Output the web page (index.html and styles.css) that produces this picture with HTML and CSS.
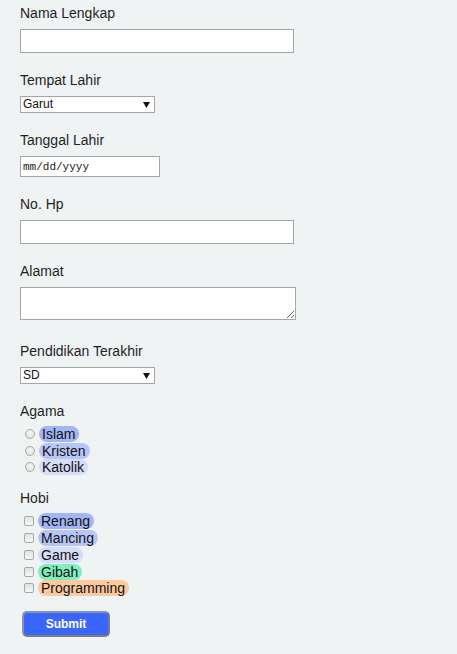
FILE: index.html
```html
<!DOCTYPE html>
<html lang="id">
<head>
<meta charset="utf-8">
<title>Form Biodata</title>
<link rel="stylesheet" href="styles.css">
</head>
<body>
<form class="form">
  <div class="field">
    <label class="label" for="nama">Nama Lengkap</label>
    <input class="text-input" id="nama" type="text">
  </div>
  <div class="field">
    <label class="label">Tempat Lahir</label>
    <div class="select">
      <span class="select-value">Garut</span>
      <svg class="select-arrow" width="7" height="6" viewBox="0 0 7 6"><path d="M0 0h7L3.5 6z" fill="#111"/></svg>
    </div>
  </div>
  <div class="field">
    <label class="label">Tanggal Lahir</label>
    <input class="date-input" type="text" placeholder="mm/dd/yyyy">
  </div>
  <div class="field">
    <label class="label">No. Hp</label>
    <input class="text-input" type="text">
  </div>
  <div class="field field-area">
    <label class="label">Alamat</label>
    <textarea class="area"></textarea>
  </div>
  <div class="field">
    <label class="label">Pendidikan Terakhir</label>
    <div class="select">
      <span class="select-value">SD</span>
      <svg class="select-arrow" width="7" height="6" viewBox="0 0 7 6"><path d="M0 0h7L3.5 6z" fill="#111"/></svg>
    </div>
  </div>
  <div class="field field-group">
    <span class="label">Agama</span>
    <div class="options radios">
      <div class="option"><span class="radio"></span><span class="pill c1">Islam</span></div>
      <div class="option"><span class="radio"></span><span class="pill c2">Kristen</span></div>
      <div class="option"><span class="radio"></span><span class="pill c3">Katolik</span></div>
    </div>
  </div>
  <div class="field field-group">
    <span class="label">Hobi</span>
    <div class="options checks">
      <div class="option"><span class="check"></span><span class="pill c1">Renang</span></div>
      <div class="option"><span class="check"></span><span class="pill c2">Mancing</span></div>
      <div class="option"><span class="check"></span><span class="pill c3">Game</span></div>
      <div class="option"><span class="check"></span><span class="pill green">Gibah</span></div>
      <div class="option"><span class="check"></span><span class="pill orange">Programming</span></div>
    </div>
  </div>
  <button class="submit" type="button">Submit</button>
</form>
</body>
</html>
```
FILE: styles.css
```css
html, body {
  margin: 0;
  padding: 0;
  background: #f0f3f4;
}
body {
  font-family: "Liberation Sans", Arial, sans-serif;
  color: #1a1a1a;
}
.form {
  display: flex;
  flex-direction: column;
  align-items: flex-start;
  padding: 5px 20px 0 20px;
}
.field {
  display: flex;
  flex-direction: column;
  align-items: flex-start;
  gap: 8px;
  margin-bottom: 19px;
}
.field-area {
  margin-bottom: 23px;
}
.field-group {
  gap: 7px;
  margin-bottom: 14px;
}
.label {
  font-size: 14px;
  line-height: 16px;
  color: #1f1f1f;
}
.text-input {
  box-sizing: border-box;
  width: 274px;
  height: 24px;
  margin: 0;
  border: 1px solid #a6a6a6;
  background: #fff;
  padding: 0 4px;
  font: 13px "Liberation Sans", Arial, sans-serif;
  outline: none;
}
.select {
  position: relative;
  box-sizing: border-box;
  width: 135px;
  height: 17px;
  border: 1px solid #a6a6a6;
  background: #fff;
  display: flex;
  align-items: center;
  justify-content: space-between;
  padding: 0 4px 0 2px;
}
.select-value {
  font-size: 12px;
  line-height: 15px;
  color: #111;
}
.select-arrow {
  display: block;
}
.date-input {
  box-sizing: border-box;
  width: 140px;
  height: 21px;
  margin: 0;
  border: 1px solid #a6a6a6;
  background: #fff;
  padding: 0 2px;
  font: 11px "Liberation Mono", "Courier New", monospace;
  outline: none;
}
.date-input::placeholder {
  color: #222;
  opacity: 1;
}
.area {
  box-sizing: border-box;
  width: 276px;
  height: 33px;
  margin: 0;
  border: 1px solid #a6a6a6;
  background: #fff;
  padding: 2px;
  resize: both;
  outline: none;
  display: block;
}
.options {
  display: flex;
  flex-direction: column;
}
.option {
  display: flex;
  align-items: center;
  font-size: 14px;
}
.radios .option {
  height: 16.6px;
}
.checks .option {
  height: 16.8px;
}
.radio {
  box-sizing: border-box;
  width: 10px;
  height: 10px;
  border-radius: 50%;
  border: 1px solid #a9a9a9;
  background: radial-gradient(circle at 50% 35%, #f6f6f6, #dcdcdc);
  margin: 0 4px 0 5px;
  flex: none;
}
.check {
  box-sizing: border-box;
  width: 10px;
  height: 10px;
  border-radius: 2px;
  border: 1px solid #a9a9a9;
  background: linear-gradient(#e2e2e2, #f6f6f6);
  margin: 0 4px 0 4px;
  flex: none;
}
.pill {
  display: inline-block;
  height: 16px;
  line-height: 16px;
  padding: 0 4px 0 3px;
  border-radius: 8px;
  color: #111;
  font-size: 14px;
}
.c1 { background: #a2b5f6; }
.c2 { background: #b8c6f7; }
.c3 { background: #d5ddf9; }
.green { background: #7ef0bd; }
.orange { background: #fdc99e; }
.submit {
  margin: 0 0 0 2px;
  box-sizing: border-box;
  width: 88px;
  height: 26px;
  background: #3a66fb;
  color: #fff;
  font: bold 12px "Liberation Sans", Arial, sans-serif;
  border: 2px solid;
  border-color: #8593b8 #7d7d7d #7d7d7d #8593b8;
  border-radius: 5px;
  padding: 0;
}
```
